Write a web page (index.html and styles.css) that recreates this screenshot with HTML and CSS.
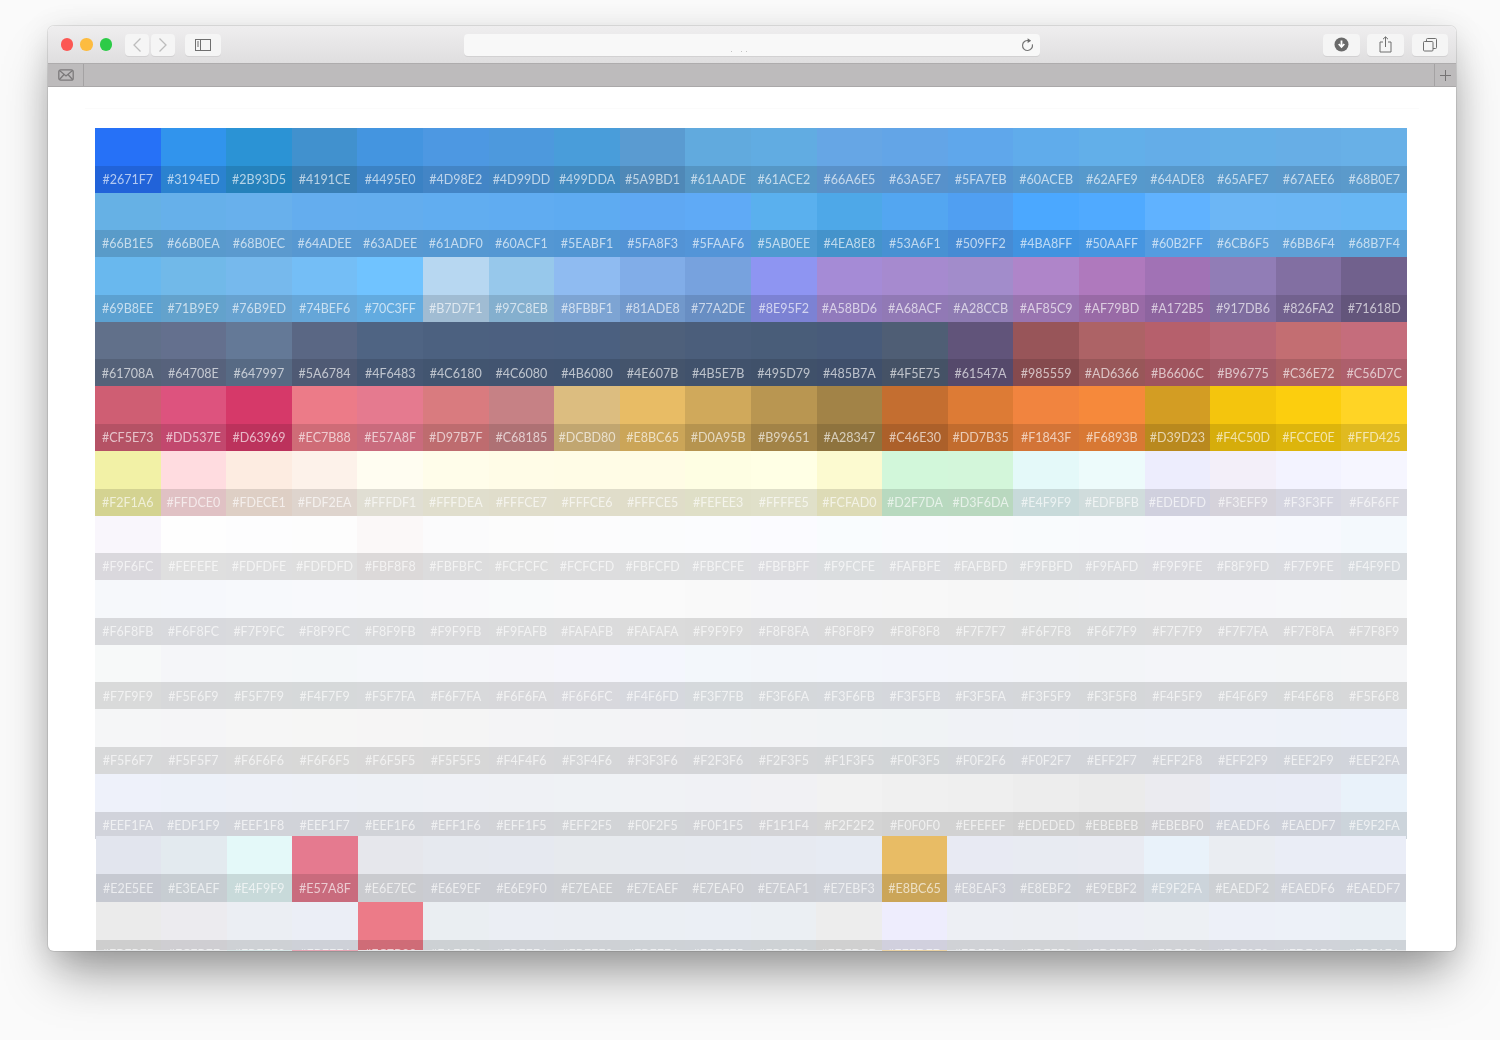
FILE: index.html
```html
<!DOCTYPE html>
<html lang="en">
<head>
<meta charset="utf-8">
<title>Colours</title>
<link rel="stylesheet" href="styles.css">
</head>
<body>
<main class="window">
  <header class="toolbar">
    <div class="lights">
      <span class="light light-red"></span>
      <span class="light light-yellow"></span>
      <span class="light light-green"></span>
    </div>
    <div class="nav-pair">
      <button class="btn btn-nav"><svg width="12" height="16" viewBox="0 0 12 16"><path d="M9.5 1.5 3 8l6.5 6.5" class="ic-faint"/></svg></button>
      <button class="btn btn-nav"><svg width="12" height="16" viewBox="0 0 12 16"><path d="M2.5 1.5 9 8l-6.5 6.5" class="ic-faint"/></svg></button>
    </div>
    <button class="btn btn-side"><svg width="16" height="12" viewBox="0 0 16 12"><rect x=".5" y=".5" width="15" height="11" class="ic"/><path d="M5.5 .5v11" class="ic"/><path d="M2 3h2M2 5h2M2 7h2" class="ic"/></svg></button>
    <div class="url">
      <span class="url-dots"><i></i><i></i><i></i></span>
      <svg width="13" height="14" viewBox="0 0 13 14"><path d="M7.5 2.6A5 5 0 1 0 11.4 6.4" class="ic ic-round"/><path d="M6.6 .2 10.2 2.7 6.6 5z" class="ic-fill"/></svg>
    </div>
    <button class="btn btn-tool btn-dl"><svg width="15" height="15" viewBox="0 0 15 15"><circle cx="7.5" cy="7.5" r="7" class="ic-fill"/><path d="M7.5 3.4v6M4.7 7l2.8 3 2.8-3" class="ic-white"/></svg></button>
    <button class="btn btn-tool btn-share"><svg width="13" height="17" viewBox="0 0 13 17"><path d="M4 6H1v10h11V6H9" class="ic"/><path d="M6.5 11V1M4 3.2 6.5 .8 9 3.2" class="ic"/></svg></button>
    <button class="btn btn-tool btn-tabs"><svg width="14" height="14" viewBox="0 0 14 14"><rect x=".5" y="3.5" width="9.500" height="9.500" rx="1" class="ic"/><path d="M3.500 3.500V1.500a1 1 0 0 1 1-1h8a1 1 0 0 1 1 1v8a1 1 0 0 1-1 1H10" class="ic"/></svg></button>
  </header>
  <nav class="tabbar">
    <div class="tab-mail"><svg width="16" height="12" viewBox="0 0 16 12"><rect x=".8" y=".8" width="14.400" height="10.400" rx="2" class="ic-dark"/><path d="M1.500 1.500 8 7l6.500-5.500M1.500 10.500 6 5.500M14.500 10.500 10 5.500" class="ic-dark"/></svg></div>
    <div class="tab-fill"></div>
    <div class="tab-plus"><svg width="11" height="11" viewBox="0 0 11 11"><path d="M5.500 0v11M0 5.500h11" class="ic-plus"/></svg></div>
  </nav>
  <section class="content">
    <div class="sheet">
      <div class="grid grid-upper" id="upper"></div>
      <div class="grid grid-lower" id="lower"></div>
    </div>
    <div class="edge" id="edge"></div>
  </section>
</main>
<script src="colors.js"></script>
</body>
</html>
```
FILE: styles.css
```css
* { box-sizing: border-box; }
html, body { margin: 0; height: 100%; }
body {
  width: 1500px;
  height: 1040px;
  overflow: hidden;
  padding: 26px 44px 0 48px;
  background: #fafafa;
  font-family: Lato, "Open Sans", sans-serif;
}
.window {
  position: relative;
  width: 1408px;
  height: 925px;
  border-radius: 6px;
  overflow: hidden;
  background: #fff;
  display: flex;
  flex-direction: column;
  box-shadow: 0 0 0 1px rgba(0,0,0,.09), 0 30px 48px -8px rgba(0,0,0,.36), 0 6px 32px rgba(0,0,0,.12);
}

.toolbar {
  height: 38px;
  flex: none;
  display: flex;
  align-items: center;
  padding-left: 12.500px;
  background: linear-gradient(#efeeef, #dfdedf);
  border-bottom: 1px solid #aeacad;
}
.lights { display: flex; gap: 7px; }
.light { width: 12.500px; height: 12.500px; border-radius: 50%; }
.light-red { background: #fc5753; }
.light-yellow { background: #fdbc40; }
.light-green { background: #2ccb47; }

.btn {
  height: 22px;
  padding: 0;
  border: 0;
  border-radius: 4px;
  background: #f5f5f5;
  box-shadow: 0 1px 0 #d2d1d2;
  display: flex;
  align-items: center;
  justify-content: center;
}
.nav-pair { display: flex; gap: 2px; margin-left: 13px; }
.btn-nav { width: 24px; }
.btn-side { width: 36px; margin-left: 10px; }
.url {
  position: relative;
  width: 576px;
  height: 22px;
  margin-left: 243px;
  padding-right: 6px;
  border-radius: 4px;
  background: #f8f8f8;
  box-shadow: 0 1px 0 #d2d1d2;
  display: flex;
  align-items: center;
  justify-content: flex-end;
}
.url-dots { position: absolute; left: 267px; top: 17px; display: flex; gap: 9px; }
.url-dots i { width: 1px; height: 1px; background: #c4c4c4; }
.url-dots i + i + i { margin-left: -5px; }
.btn-tool { width: 37px; }
.btn-dl { margin-left: 283px; }
.btn-share { margin-left: 7px; }
.btn-tabs { margin-left: 8px; width: 36px; }

svg { display: block; }
.ic { fill: none; stroke: #6f6f6f; stroke-width: 1; }
.ic-round { stroke: #777; stroke-width: 1.200; }
.ic-faint { fill: none; stroke: #bdbdbd; stroke-width: 1.300; }
.ic-fill { fill: #6a6a6a; }
.ic-white { fill: none; stroke: #fff; stroke-width: 1.800; }
.ic-dark { fill: none; stroke: #7c7a7b; stroke-width: 1.300; }
.ic-plus { fill: none; stroke: #757374; stroke-width: 1; }

.tabbar {
  height: 23px;
  flex: none;
  display: flex;
  background: #bdbbbc;
  border-bottom: 1px solid #aaa8a9;
}
.tab-mail {
  width: 36px;
  padding-left: 10px;
  display: flex;
  align-items: center;
  border-right: 1px solid #a4a2a3;
}
.tab-fill { flex: 1; }
.tab-plus {
  width: 22px;
  display: flex;
  align-items: center;
  justify-content: center;
  border-left: 1px solid #a4a2a3;
}

.content { position: relative; flex: 1; overflow: hidden; padding: 21px 37px 0; }
.sheet { border-top: 1px solid #fbfbfb; padding: 19px 10px 0; filter: blur(.3px); }
.grid { display: grid; grid-template-columns: repeat(20, 1fr); }
.grid-upper { width: 1312px; grid-auto-rows: 64.600px; }
.grid-lower { width: 1310.500px; margin: -2.600px 0 0 .5px; grid-auto-rows: 66px; }
.cell { display: flex; flex-direction: column; justify-content: flex-end; }
.band {
  height: 27px;
  padding-top: 2px;
  display: flex;
  align-items: center;
  justify-content: center;
  background: rgba(0,0,0,.12);
  color: rgba(255,255,255,.65);
  font-size: 12.500px;
  line-height: 1;
  white-space: nowrap;
}
.grid-lower .band { height: 28px; }
.edge {
  position: absolute;
  left: 47.500px;
  bottom: 0;
  width: 1310.500px;
  height: 1px;
  display: grid;
  grid-template-columns: repeat(20, 1fr);
}
```
FILE: colors.js
```js
var UPPER = [
"2671F7 3194ED 2B93D5 4191CE 4495E0 4D98E2 4D99DD 499DDA 5A9BD1 61AADE 61ACE2 66A6E5 63A5E7 5FA7EB 60ACEB 62AFE9 64ADE8 65AFE7 67AEE6 68B0E7",
"66B1E5 66B0EA 68B0EC 64ADEE 63ADEE 61ADF0 60ACF1 5EABF1 5FA8F3 5FAAF6 5AB0EE 4EA8E8 53A6F1 509FF2 4BA8FF 50AAFF 60B2FF 6CB6F5 6BB6F4 68B7F4",
"69B8EE 71B9E9 76B9ED 74BEF6 70C3FF B7D7F1 97C8EB 8FBBF1 81ADE8 77A2DE 8E95F2 A58BD6 A68ACF A28CCB AF85C9 AF79BD A172B5 917DB6 826FA2 71618D",
"61708A 64708E 647997 5A6784 4F6483 4C6180 4C6080 4B6080 4E607B 4B5E7B 495D79 485B7A 4F5E75 61547A 985559 AD6366 B6606C B96775 C36E72 C56D7C",
"CF5E73 DD537E D63969 EC7B88 E57A8F D97B7F C68185 DCBD80 E8BC65 D0A95B B99651 A28347 C46E30 DD7B35 F1843F F6893B D39D23 F4C50D FCCE0E FFD425",
"F2F1A6 FFDCE0 FDECE1 FDF2EA FFFDF1 FFFDEA FFFCE7 FFFCE6 FFFCE5 FEFEE3 FFFFE5 FCFAD0 D2F7DA D3F6DA E4F9F9 EDFBFB EDEDFD F3EFF9 F3F3FF F6F6FF",
"F9F6FC FEFEFE FDFDFE FDFDFD FBF8F8 FBFBFC FCFCFC FCFCFD FBFCFD FBFCFE FBFBFF F9FCFE FAFBFE FAFBFD F9FBFD F9FAFD F9F9FE F8F9FD F7F9FE F4F9FD",
"F6F8FB F6F8FC F7F9FC F8F9FC F8F9FB F9F9FB F9FAFB FAFAFB FAFAFA F9F9F9 F8F8FA F8F8F9 F8F8F8 F7F7F7 F6F7F8 F6F7F9 F7F7F9 F7F7FA F7F8FA F7F8F9",
"F7F9F9 F5F6F9 F5F7F9 F4F7F9 F5F7FA F6F7FA F6F6FA F6F6FC F4F6FD F3F7FB F3F6FA F3F6FB F3F5FB F3F5FA F3F5F9 F3F5F8 F4F5F9 F4F6F9 F4F6F8 F5F6F8",
"F5F6F7 F5F5F7 F6F6F6 F6F6F5 F6F5F5 F5F5F5 F4F4F6 F3F4F6 F3F3F6 F2F3F6 F2F3F5 F1F3F5 F0F3F5 F0F2F6 F0F2F7 EFF2F7 EFF2F8 EFF2F9 EEF2F9 EEF2FA",
"EEF1FA EDF1F9 EEF1F8 EEF1F7 EEF1F6 EFF1F6 EFF1F5 EFF2F5 F0F2F5 F0F1F5 F1F1F4 F2F2F2 F0F0F0 EFEFEF EDEDED EBEBEB EBEBF0 EAEDF6 EAEDF7 E9F2FA"
];
var LOWER = [
"E2E5EE E3EAEF E4F9F9 E57A8F E6E7EC E6E9EF E6E9F0 E7EAEE E7EAEF E7EAF0 E7EAF1 E7EBF3 E8BC65 E8EAF3 E8EBF2 E9EBF2 E9F2FA EAEDF2 EAEDF6 EAEDF7",
"EBEBEB ECEBEF EBEEF3 EBEEF6 EC7B88 EAEEF2 EBEEF4 EBEEF3 EBEFF4 EBEFF5 EBEFF3 EDEDED EEEDFD EDEFF4 EDEFF3 EDEFF5 EDF0F4 EDF0F8 EDF1F8 EBF1F6"
];
var EDGE = { 2: "#d6e6e6", 3: "#e8a5b3", 12: "#ecd3a2" };

function fill(host, rows) {
  rows.forEach(function (row) {
    row.split(" ").forEach(function (hex) {
      var cell = document.createElement("div");
      cell.className = "cell";
      cell.style.background = "#" + hex;
      var band = document.createElement("div");
      band.className = "band";
      band.textContent = "#" + hex;
      cell.appendChild(band);
      host.appendChild(cell);
    });
  });
}
fill(document.getElementById("upper"), UPPER);
fill(document.getElementById("lower"), LOWER);

var edge = document.getElementById("edge");
for (var i = 0; i < 20; i++) {
  var piece = document.createElement("div");
  piece.style.background = EDGE[i] || "#e4e6e8";
  edge.appendChild(piece);
}
```
